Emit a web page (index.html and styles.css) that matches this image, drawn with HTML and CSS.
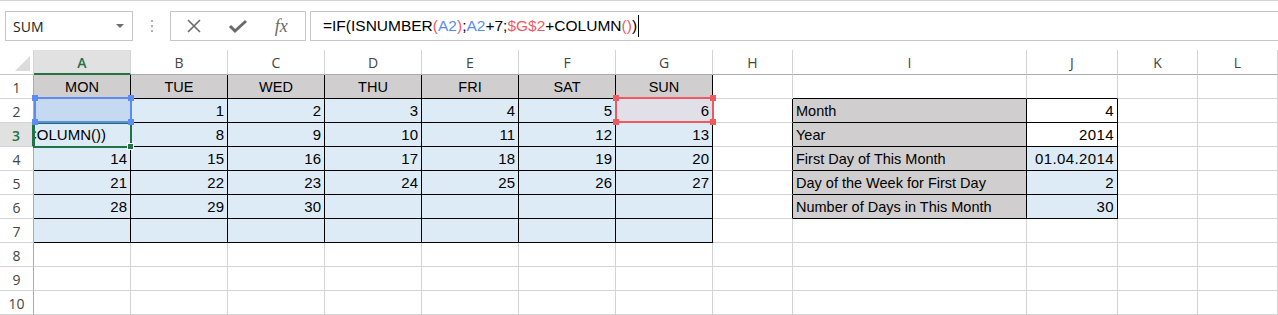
FILE: index.html
```html
<!DOCTYPE html>
<html>
<head>
<meta charset="utf-8">
<link rel="stylesheet" href="styles.css">
</head>
<body>
<div class="fbar">
  <div class="namebox"><span class="nb-text">SUM</span><span class="nb-arrow"></span></div>
  <div class="dots"><i></i><i></i><i></i></div>
  <div class="fxbox">
    <svg class="ic" width="16" height="16" viewBox="0 0 16 16"><path d="M2 2 L14 14 M14 2 L2 14" stroke="#6a6a6a" stroke-width="1.6" fill="none"/></svg>
    <svg class="ic" width="20" height="16" viewBox="0 0 20 16"><path d="M2 8 L7 13 L18 3" stroke="#6a6a6a" stroke-width="3" fill="none" stroke-linejoin="miter"/></svg>
    <span class="fx">fx</span>
  </div>
  <div class="formula"><span>=IF(ISNUMBER</span><span class="r">(</span><span class="b">A2</span><span class="r">)</span><span>;</span><span class="b">A2</span><span>+7;</span><span class="r">$G$2</span><span>+COLUMN</span><span class="r">()</span><span>)</span><span class="caret"></span></div>
</div>

<div class="sheet">
  <div class="corner"><span class="tri"></span></div>
  <div class="ch sel">A</div><div class="ch">B</div><div class="ch">C</div><div class="ch">D</div><div class="ch">E</div><div class="ch">F</div><div class="ch">G</div><div class="ch">H</div><div class="ch">I</div><div class="ch">J</div><div class="ch">K</div><div class="ch">L</div>

  <div class="rh">1</div>
  <div class="c cal hd">MON</div><div class="c cal hd">TUE</div><div class="c cal hd">WED</div><div class="c cal hd">THU</div><div class="c cal hd">FRI</div><div class="c cal hd">SAT</div><div class="c cal hd">SUN</div>
  <div class="c"></div><div class="c bk-b"></div><div class="c bk-b"></div><div class="c"></div><div class="c"></div>

  <div class="rh">2</div>
  <div class="c cal selA"><span class="ref blue-ref"><i class="h tl"></i><i class="h tr"></i><i class="h bl"></i><i class="h br"></i></span></div>
  <div class="c cal num">1</div><div class="c cal num">2</div><div class="c cal num">3</div><div class="c cal num">4</div><div class="c cal num">5</div>
  <div class="c cal num selG">6<span class="ref red-ref"><i class="h tl"></i><i class="h tr"></i><i class="h bl"></i><i class="h br"></i></span></div>
  <div class="c bk-r"></div><div class="c tb lbl">Month</div><div class="c tb num">4</div><div class="c"></div><div class="c"></div>

  <div class="rh sel">3</div>
  <div class="c cal active"><span class="clip"><span class="edit">=IF(ISNUMBER(A2);A2+7;$G$2+COLUMN())</span></span><span class="act"><i class="fill"></i></span></div>
  <div class="c cal num">8</div><div class="c cal num">9</div><div class="c cal num">10</div><div class="c cal num">11</div><div class="c cal num">12</div><div class="c cal num">13</div>
  <div class="c bk-r"></div><div class="c tb lbl">Year</div><div class="c tb num">2014</div><div class="c"></div><div class="c"></div>

  <div class="rh">4</div>
  <div class="c cal num">14</div><div class="c cal num">15</div><div class="c cal num">16</div><div class="c cal num">17</div><div class="c cal num">18</div><div class="c cal num">19</div><div class="c cal num">20</div>
  <div class="c bk-r"></div><div class="c tb lbl">First Day of This Month</div><div class="c tb num bl">01.04.2014</div><div class="c"></div><div class="c"></div>

  <div class="rh">5</div>
  <div class="c cal num">21</div><div class="c cal num">22</div><div class="c cal num">23</div><div class="c cal num">24</div><div class="c cal num">25</div><div class="c cal num">26</div><div class="c cal num">27</div>
  <div class="c bk-r"></div><div class="c tb lbl">Day of the Week for First Day</div><div class="c tb num bl">2</div><div class="c"></div><div class="c"></div>

  <div class="rh">6</div>
  <div class="c cal num">28</div><div class="c cal num">29</div><div class="c cal num">30</div><div class="c cal"></div><div class="c cal"></div><div class="c cal"></div><div class="c cal"></div>
  <div class="c bk-r"></div><div class="c tb lbl">Number of Days in This Month</div><div class="c tb num bl">30</div><div class="c"></div><div class="c"></div>

  <div class="rh">7</div>
  <div class="c cal"></div><div class="c cal"></div><div class="c cal"></div><div class="c cal"></div><div class="c cal"></div><div class="c cal"></div><div class="c cal"></div>
  <div class="c"></div><div class="c"></div><div class="c"></div><div class="c"></div><div class="c"></div>

  <div class="rh">8</div>
  <div class="c"></div><div class="c"></div><div class="c"></div><div class="c"></div><div class="c"></div><div class="c"></div><div class="c"></div><div class="c"></div><div class="c"></div><div class="c"></div><div class="c"></div><div class="c"></div>

  <div class="rh">9</div>
  <div class="c"></div><div class="c"></div><div class="c"></div><div class="c"></div><div class="c"></div><div class="c"></div><div class="c"></div><div class="c"></div><div class="c"></div><div class="c"></div><div class="c"></div><div class="c"></div>

  <div class="rh">10</div>
  <div class="c"></div><div class="c"></div><div class="c"></div><div class="c"></div><div class="c"></div><div class="c"></div><div class="c"></div><div class="c"></div><div class="c"></div><div class="c"></div><div class="c"></div><div class="c"></div>
</div>
</body>
</html>
```

FILE: styles.css
```css
html, body {
  margin: 0;
  padding: 0;
  background: #ffffff;
  overflow: hidden;
}
body {
  width: 1278px;
  height: 315px;
  font-family: "Liberation Sans", Arial, sans-serif;
  color: #000;
}

/* formula bar */
.fbar {
  height: 50px;
  box-sizing: border-box;
  border-top: 1px solid #d4d4d4;
  padding-top: 10px;
  display: flex;
  align-items: flex-start;
}
.namebox {
  margin-left: 5px;
  width: 128px;
  height: 30px;
  box-sizing: border-box;
  border: 1px solid #c6c6c6;
  display: flex;
  align-items: center;
  justify-content: space-between;
  padding: 0 8px 0 7px;
}
.nb-text {
  font-family: "Open Sans", sans-serif;
  font-size: 14px;
  color: #222;
}
.nb-arrow {
  width: 0;
  height: 0;
  border-left: 4px solid transparent;
  border-right: 4px solid transparent;
  border-top: 4px solid #6d6d6d;
}
.dots {
  width: 37px;
  height: 30px;
  display: flex;
  flex-direction: column;
  align-items: center;
  justify-content: center;
  gap: 3px;
}
.dots i {
  display: block;
  width: 2px;
  height: 2px;
  background: #b0b0b0;
}
.fxbox {
  width: 136px;
  height: 30px;
  box-sizing: border-box;
  border: 1px solid #c6c6c6;
  display: flex;
  align-items: center;
  justify-content: space-around;
  padding: 0 4px 0 2px;
}
.fx {
  font-family: "Liberation Serif", serif;
  font-style: italic;
  font-size: 18px;
  color: #6a6a6a;
}
.formula {
  margin-left: 4px;
  flex: 1;
  height: 30px;
  box-sizing: border-box;
  border: 1px solid #c6c6c6;
  border-right: none;
  display: flex;
  align-items: center;
  padding-left: 12px;
  font-size: 15.5px;
  white-space: nowrap;
}
.formula .r { color: #ef5a60; }
.formula .b { color: #5b8cf4; }
.caret {
  display: inline-block;
  width: 1px;
  height: 22px;
  background: #000;
  margin-left: 1px;
}

/* sheet grid */
.sheet {
  display: grid;
  grid-template-columns: 34px repeat(7, 97px) 80px 234px 91px 80px 80px;
  grid-template-rows: 25px repeat(10, 24px);
}
.corner {
  position: relative;
  border-right: 1px solid #d4d4d4;
  border-bottom: 1px solid #c6c6c6;
}
.tri {
  position: absolute;
  right: 3px;
  bottom: 3px;
  width: 0;
  height: 0;
  border-left: 15px solid transparent;
  border-bottom: 15px solid #dcdcdc;
}
.ch, .rh {
  box-sizing: border-box;
  display: flex;
  align-items: center;
  justify-content: center;
  font-family: "Open Sans", sans-serif;
  font-size: 14px;
  color: #444;
  background: #fff;
}
.ch {
  border-right: 1px solid #d4d4d4;
  border-bottom: 1px solid #ababab;
  padding-top: 1px;
}
.ch.sel {
  background: #e1e1e1;
  color: #217346;
  font-weight: 600;
  border-bottom: 2px solid #217346;
  padding-top: 2px;
}
.rh {
  border-right: 1px solid #ababab;
  border-bottom: 1px solid #d4d4d4;
  padding-top: 1px;
}
.rh.sel {
  background: #e1e1e1;
  color: #217346;
  font-weight: 600;
  border-right: 2px solid #217346;
}

.c {
  box-sizing: border-box;
  border-right: 1px solid #d4d4d4;
  border-bottom: 1px solid #d4d4d4;
  font-size: 14.5px;
  display: flex;
  align-items: flex-end;
  padding: 0 3px 3px 3px;
  white-space: nowrap;
  position: relative;
}
.cal {
  background: #ddebf7;
  border-right: 1px solid #000;
  border-bottom: 1px solid #000;
}
.cal.hd {
  background: #d0cece;
  justify-content: center;
}
.num {
  justify-content: flex-end;
  font-size: 15px;
}
.bk-r { border-right: 1px solid #000; }
.bk-b { border-bottom: 1px solid #000; }
.tb {
  border-right: 1px solid #000;
  border-bottom: 1px solid #000;
}
.lbl { background: #d0cece; }
.tb.bl { background: #ddebf7; }
.tb.num { letter-spacing: 0.4px; }

.selA { background: #c5d9f1; }
.selG { background: #e1dfe8; }

.ref {
  position: absolute;
  left: -1px;
  top: -2px;
  right: -2px;
  bottom: -1px;
  border: 2px solid;
  z-index: 3;
}
.blue-ref { border-color: #5b8cf4; left: 0; }
.red-ref { border-color: #ef5a60; }
.h {
  position: absolute;
  width: 6px;
  height: 6px;
}
.blue-ref .h { background: #5b8cf4; }
.red-ref .h { background: #ef5a60; }
.h.tl { left: -4px; top: -4px; }
.h.tr { right: -4px; top: -4px; }
.h.bl { left: -4px; bottom: -4px; }
.h.br { right: -4px; bottom: -4px; }

.active { padding: 0; }
.clip {
  position: absolute;
  left: 1px;
  top: 0;
  bottom: 0;
  right: 24px;
  overflow: hidden;
  display: flex;
  justify-content: flex-end;
  align-items: flex-end;
  padding-bottom: 3px;
}
.edit {
  font-size: 15px;
  flex: none;
}
.act {
  position: absolute;
  left: -1px;
  top: -1px;
  right: -2px;
  bottom: -2px;
  border: 2px solid #217346;
  z-index: 2;
}
.fill {
  position: absolute;
  right: -4px;
  bottom: -4px;
  width: 5px;
  height: 5px;
  background: #217346;
  border: 1px solid #fff;
}
```
